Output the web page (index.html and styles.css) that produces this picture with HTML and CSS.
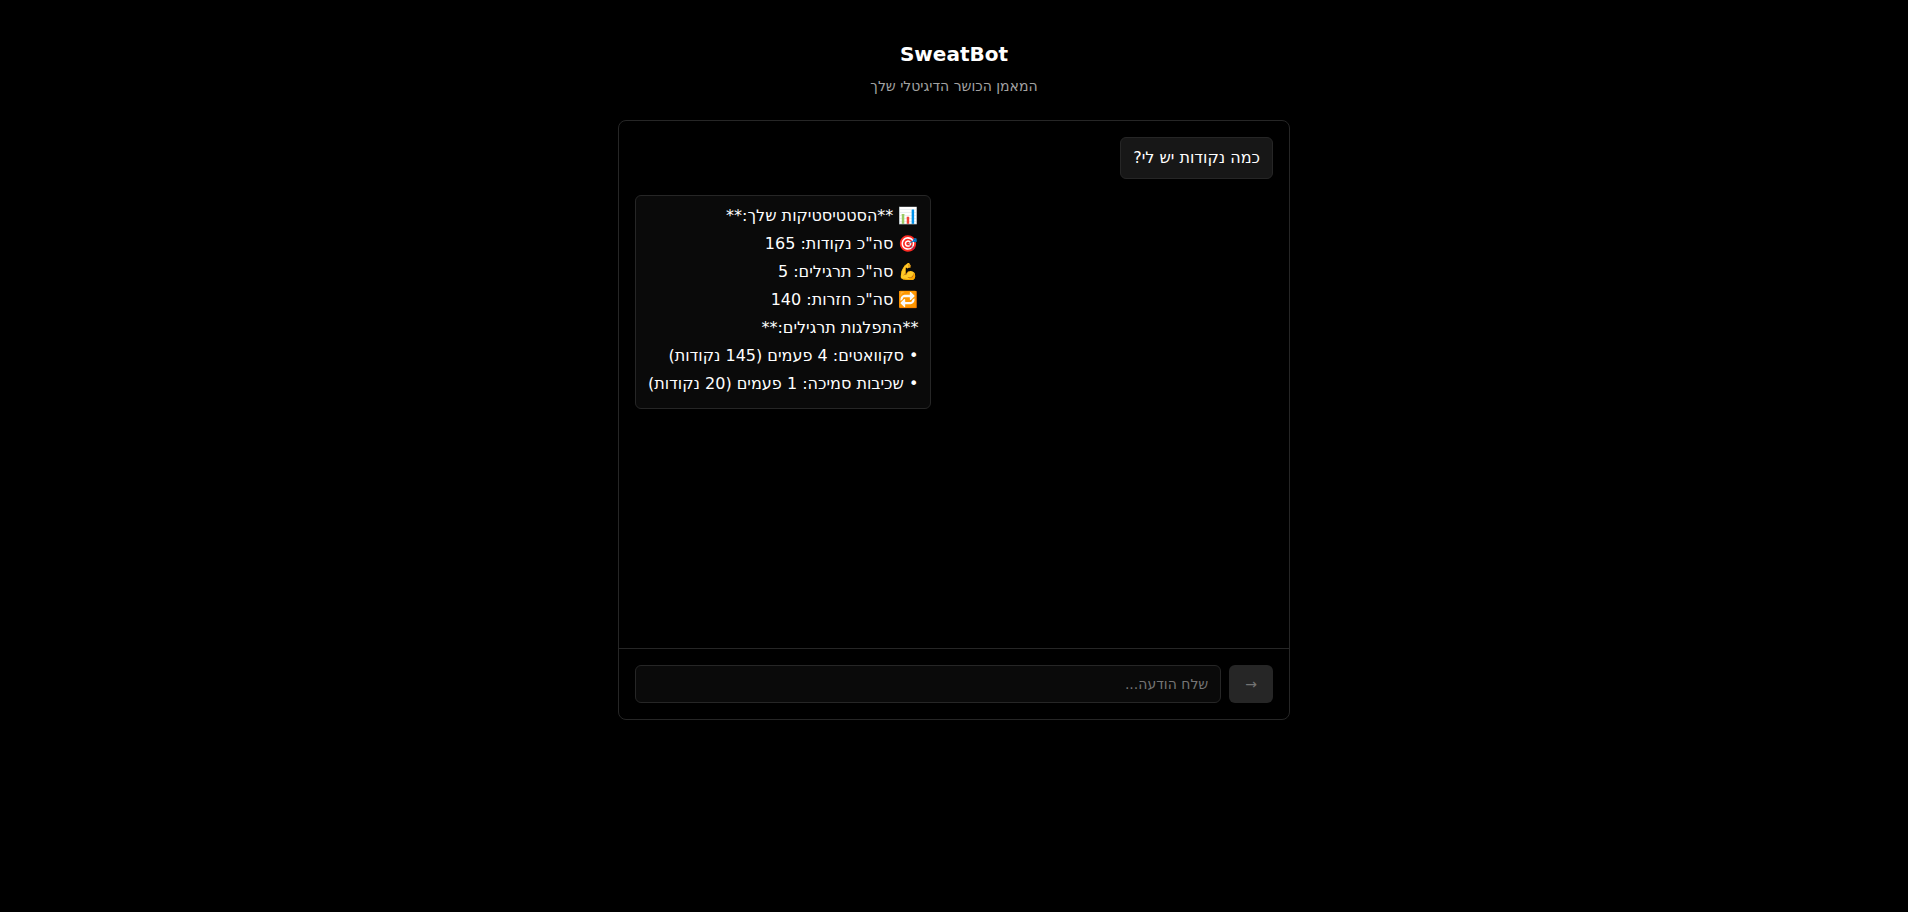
FILE: index.html
```html
<!DOCTYPE html>
<html lang="he" dir="rtl">
<head>
<meta charset="utf-8">
<meta name="viewport" content="width=device-width, initial-scale=1">
<title>SweatBot</title>
<link rel="stylesheet" href="styles.css">
</head>
<body>
<main class="app">
  <header class="header">
    <h1 class="title">SweatBot</h1>
    <p class="subtitle">המאמן הכושר הדיגיטלי שלך</p>
  </header>
  <section class="chat">
    <div class="messages">
      <div class="message message-user"><p class="line">כמה נקודות יש לי?</p></div>
      <div class="message message-bot">
        <p class="line">📊 **הסטטיסטיקות שלך:**</p>
        <p class="line">🎯 סה"כ נקודות: 165</p>
        <p class="line">💪 סה"כ תרגילים: 5</p>
        <p class="line">🔁 סה"כ חזרות: 140</p>
        <p class="line">**התפלגות תרגילים:**</p>
        <p class="line">• סקוואטים: 4 פעמים (145 נקודות)</p>
        <p class="line">• שכיבות סמיכה: 1 פעמים (20 נקודות)</p>
      </div>
    </div>
    <form class="composer">
      <button class="send" type="submit" aria-label="שלח" disabled>→</button>
      <input class="field" type="text" aria-label="הודעה" placeholder="שלח הודעה...">
    </form>
  </section>
</main>
</body>
</html>
```

FILE: styles.css
```css
* {
  box-sizing: border-box;
}

body {
  margin: 0;
  background: #000;
  color: #fff;
  font-family: "DejaVu Sans", sans-serif;
  font-size: 16px;
  line-height: 24px;
}

.app {
  max-width: 704px;
  margin: 0 auto;
  padding: 40px 16px;
}

.header {
  margin-bottom: 24px;
  text-align: center;
}

.title {
  margin: 0 0 8px;
  font-size: 20px;
  line-height: 28px;
}

.subtitle {
  margin: 0;
  color: #a3a3a3;
  font-size: 14px;
  line-height: 20px;
}

.chat {
  display: flex;
  flex-direction: column;
  min-height: 600px;
  border: 1px solid #262626;
  border-radius: 8px;
}

.messages {
  display: flex;
  flex: 1;
  flex-direction: column;
  gap: 16px;
  padding: 16px;
}

.message {
  padding: 8px 12px;
  border: 1px solid #262626;
  border-radius: 6px;
}

.message-user {
  align-self: flex-start;
  background: #171717;
}

.message-bot {
  align-self: flex-end;
  background: #0a0a0a;
}

.line {
  margin: 0;
}

.message-bot .line {
  margin-bottom: 4px;
}

.composer {
  display: flex;
  gap: 8px;
  padding: 16px;
  border-top: 1px solid #262626;
}

.field {
  flex: 1;
  min-width: 0;
  padding: 8px 12px;
  border: 1px solid #262626;
  border-radius: 6px;
  background: #0a0a0a;
  color: #fff;
  font: inherit;
  font-size: 14px;
  line-height: 20px;
}

.field::placeholder {
  color: #757575;
}

.send {
  padding: 8px 16px;
  border: 0;
  border-radius: 6px;
  background: #262626;
  color: #737373;
  font: inherit;
  font-size: 14px;
  line-height: 20px;
}
```
